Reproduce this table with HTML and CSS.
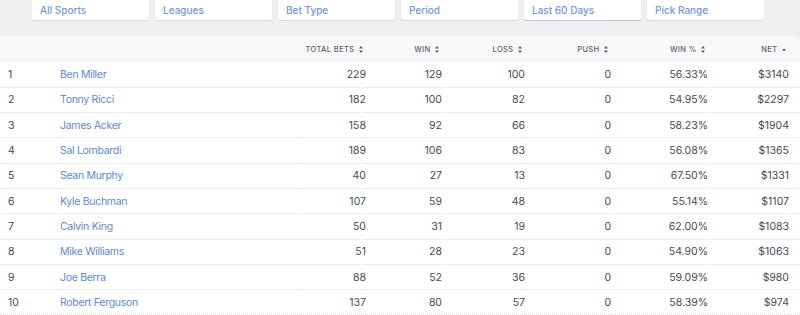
FILE: index.html
```html
<!DOCTYPE html>
<html lang="en">
<head>
    <meta charset="UTF-8">
    <meta name="viewport" content="width=device-width, initial-scale=1.0">
    <title>Leaderboard</title>
    <link rel="stylesheet" href="styles.css">
</head>
<body>
    <div class="filters">
        <div class="filter">All Sports</div>
        <div class="filter">Leagues</div>
        <div class="filter">Bet Type</div>
        <div class="filter">Period</div>
        <div class="filter active">Last 60 Days</div>
        <div class="filter">Pick Range</div>
    </div>

    <div class="board">
        <table>
            <colgroup>
                <col class="c-rank">
                <col class="c-name">
                <col class="c-total">
                <col class="c-win">
                <col class="c-loss">
                <col class="c-push">
                <col class="c-pct">
                <col class="c-net">
                <col class="c-end">
            </colgroup>
            <thead>
                <tr>
                    <th></th>
                    <th></th>
                    <th class="num">Total Bets <svg class="sort" viewBox="0 0 4 7"><path d="M2 0L4 2.6H0z M2 7L4 4.4H0z"/></svg></th>
                    <th class="num">Win <svg class="sort" viewBox="0 0 4 7"><path d="M2 0L4 2.6H0z M2 7L4 4.4H0z"/></svg></th>
                    <th class="num">Loss <svg class="sort" viewBox="0 0 4 7"><path d="M2 0L4 2.6H0z M2 7L4 4.4H0z"/></svg></th>
                    <th class="num">Push <svg class="sort" viewBox="0 0 4 7"><path d="M2 0L4 2.6H0z M2 7L4 4.4H0z"/></svg></th>
                    <th class="num">Win % <svg class="sort" viewBox="0 0 4 7"><path d="M2 0L4 2.6H0z M2 7L4 4.4H0z"/></svg></th>
                    <th class="num">Net <svg class="sort down" viewBox="0 0 4 7"><path d="M0 3H4L2 5.6z"/></svg></th>
                    <th></th>
                </tr>
            </thead>
            <tbody>
                <tr><td>1</td><td class="name">Ben Miller</td><td class="num">229</td><td class="num">129</td><td class="num">100</td><td class="num">0</td><td class="num">56.33%</td><td class="num">$3140</td><td></td></tr>
                <tr><td>2</td><td class="name">Tonny Ricci</td><td class="num">182</td><td class="num">100</td><td class="num">82</td><td class="num">0</td><td class="num">54.95%</td><td class="num">$2297</td><td></td></tr>
                <tr><td>3</td><td class="name">James Acker</td><td class="num">158</td><td class="num">92</td><td class="num">66</td><td class="num">0</td><td class="num">58.23%</td><td class="num">$1904</td><td></td></tr>
                <tr><td>4</td><td class="name">Sal Lombardi</td><td class="num">189</td><td class="num">106</td><td class="num">83</td><td class="num">0</td><td class="num">56.08%</td><td class="num">$1365</td><td></td></tr>
                <tr><td>5</td><td class="name">Sean Murphy</td><td class="num">40</td><td class="num">27</td><td class="num">13</td><td class="num">0</td><td class="num">67.50%</td><td class="num">$1331</td><td></td></tr>
                <tr><td>6</td><td class="name">Kyle Buchman</td><td class="num">107</td><td class="num">59</td><td class="num">48</td><td class="num">0</td><td class="num">55.14%</td><td class="num">$1107</td><td></td></tr>
                <tr><td>7</td><td class="name">Calvin King</td><td class="num">50</td><td class="num">31</td><td class="num">19</td><td class="num">0</td><td class="num">62.00%</td><td class="num">$1083</td><td></td></tr>
                <tr><td>8</td><td class="name">Mike Williams</td><td class="num">51</td><td class="num">28</td><td class="num">23</td><td class="num">0</td><td class="num">54.90%</td><td class="num">$1063</td><td></td></tr>
                <tr><td>9</td><td class="name">Joe Berra</td><td class="num">88</td><td class="num">52</td><td class="num">36</td><td class="num">0</td><td class="num">59.09%</td><td class="num">$980</td><td></td></tr>
                <tr><td>10</td><td class="name">Robert Ferguson</td><td class="num">137</td><td class="num">80</td><td class="num">57</td><td class="num">0</td><td class="num">58.39%</td><td class="num">$974</td><td></td></tr>
            </tbody>
        </table>
    </div>
</body>
</html>
```

FILE: styles.css
```css
body{
    margin: 0;
    background: #efefef;
    font-family: Inter, "Noto Sans", "Liberation Sans", sans-serif;
    color: #444a55;
}
.filters{
    display: flex;
    gap: 6px;
    padding-left: 32px;
    height: 36px;
}
.filter{
    width: 117px;
    height: 20px;
    box-sizing: border-box;
    background: #fff;
    border-radius: 0 0 3px 3px;
    box-shadow: 0 1px 1px rgba(0, 0, 0, 0.09);
    padding: 4px 8px 0;
    font-size: 10px;
    font-weight: 500;
    color: #7596da;
}
.filter.active{
    box-shadow: 0 1px 1px rgba(115, 147, 217, 0.45);
}
.board{
    background: #fff;
    border-top-right-radius: 6px;
    overflow: hidden;
}
table{
    width: 100%;
    table-layout: fixed;
    border-collapse: collapse;
}
.c-rank{ width: 60px; }
.c-name{ width: 240px; }
.c-total{ width: 66px; }
.c-win{ width: 76px; }
.c-loss{ width: 83px; }
.c-push{ width: 86px; }
.c-pct{ width: 97px; }
.c-net{ width: 81px; }
.c-end{ width: 11px; }
thead tr{
    background: #f7f8fa;
    height: 26px;
}
th{
    padding: 0 3px 0 0;
    font-size: 7.5px;
    font-weight: 500;
    letter-spacing: 0.4px;
    text-transform: uppercase;
    color: #5a606b;
    white-space: nowrap;
}
.sort{
    width: 4px;
    height: 7px;
    margin-left: 2px;
    vertical-align: -1px;
    fill: #5a606b;
}
tbody tr{
    height: 25.3px;
    border-bottom: 1px dotted #e2e4e8;
}
td{
    padding: 0;
    font-size: 10.5px;
    color: #444a55;
    white-space: nowrap;
}
td:first-child{
    padding-left: 8px;
}
.name{
    color: #6088d2;
    letter-spacing: -0.3px;
}
.num{
    text-align: right;
}
```
